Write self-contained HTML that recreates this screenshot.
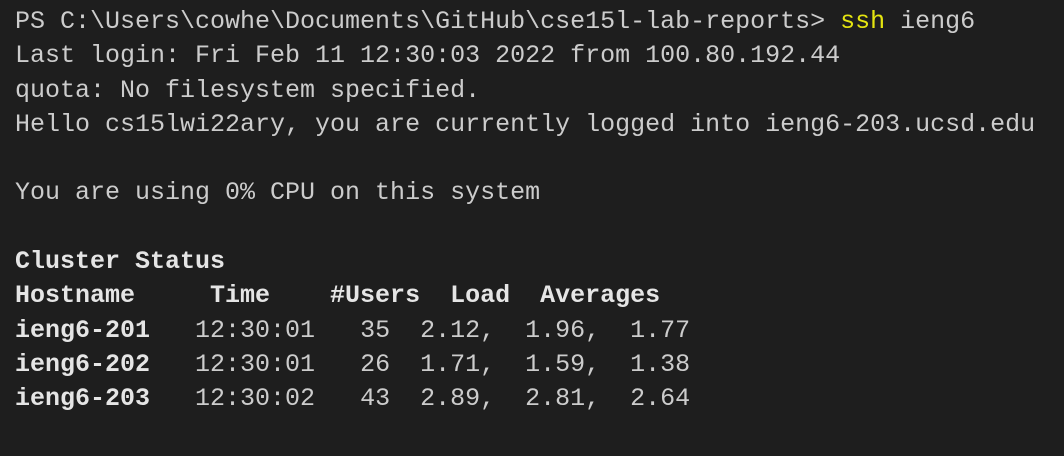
<!DOCTYPE html>
<html><head><meta charset="utf-8"><style>
html,body{margin:0;padding:0;background:#1e1e1e;width:1064px;height:456px;overflow:hidden}
pre{margin:0;padding:5px 0 0 15px;font-family:"Liberation Mono",monospace;font-size:25px;line-height:34.3px;color:#cccccc;white-space:pre}
.y{color:#e5e510}
b{font-weight:bold;color:#e5e5e5}
</style></head><body><pre>PS C:\Users\cowhe\Documents\GitHub\cse15l-lab-reports&gt; <span class="y">ssh</span> ieng6
Last login: Fri Feb 11 12:30:03 2022 from 100.80.192.44
quota: No filesystem specified.
Hello cs15lwi22ary, you are currently logged into ieng6-203.ucsd.edu

You are using 0% CPU on this system

<b>Cluster Status</b>
<b>Hostname     Time    #Users  Load  Averages</b>
<b>ieng6-201</b>   12:30:01   35  2.12,  1.96,  1.77
<b>ieng6-202</b>   12:30:01   26  1.71,  1.59,  1.38
<b>ieng6-203</b>   12:30:02   43  2.89,  2.81,  2.64
</pre></body></html>
